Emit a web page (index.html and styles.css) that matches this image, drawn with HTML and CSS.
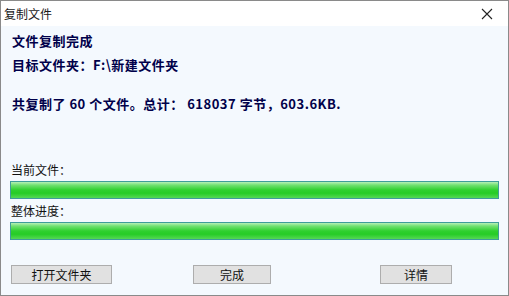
FILE: index.html
```html
<!DOCTYPE html>
<html lang="zh-CN">
<head>
    <meta charset="UTF-8">
    <title>复制文件</title>
    <link rel="stylesheet" href="styles.css">
</head>
<body>
    <div class="window">
        <div class="titlebar">
            <span class="title">复制文件</span>
            <svg class="close" width="12" height="12" viewBox="0 0 12 12">
                <path d="M1 1 L11 11 M11 1 L1 11" stroke="#222" stroke-width="1.1" fill="none"/>
            </svg>
        </div>
        <div class="content">
            <div class="info first">文件复制完成</div>
            <div class="info">目标文件夹：F:\新建文件夹</div>
            <div class="info summary">共复制了 60 个文件。总计： 618037 字节，603.6KB.</div>

            <div class="label first-label">当前文件：</div>
            <div class="bar"><div class="fill"></div></div>
            <div class="label">整体进度：</div>
            <div class="bar"><div class="fill"></div></div>

            <div class="buttons">
                <button class="btn btn-open">打开文件夹</button>
                <button class="btn btn-done">完成</button>
                <button class="btn btn-detail">详情</button>
            </div>
        </div>
    </div>
</body>
</html>
```

FILE: styles.css
```css
body {
    margin: 0;
    padding: 0;
    font-family: "Noto Sans CJK SC", "Liberation Sans", sans-serif;
}

.window {
    box-sizing: border-box;
    width: 509px;
    height: 296px;
    border: 1px solid #8a8a8a;
    background-color: #f4f9fe;
}

.titlebar {
    height: 25px;
    background-color: #ffffff;
    display: flex;
    align-items: center;
    justify-content: space-between;
    padding: 0 15px 0 3px;
}

.title {
    font-size: 12px;
    color: #1a1a1a;
}

.close {
    display: block;
}

.content {
    padding: 3px 9px 0 9px;
}

.info {
    font-size: 13px;
    font-weight: bold;
    color: #00004a;
    line-height: 24px;
    padding-left: 2px;
    letter-spacing: 0.5px;
    white-space: nowrap;
}

.summary {
    margin-top: 15px;
}

.label {
    font-size: 12px;
    color: #111;
    line-height: 16px;
    margin-top: 4px;
    padding-left: 1px;
}

.first-label {
    margin-top: 46px;
}

.bar {
    margin-top: 3px;
    height: 18px;
    box-sizing: border-box;
    border: 1px solid #3f9c9a;
    background-color: #e6e6e6;
}

.fill {
    width: 100%;
    height: 100%;
    background: linear-gradient(to bottom, #b6f0b6 0%, #6fe06f 20%, #2fd02f 50%, #26cc26 70%, #55d855 100%);
}

.buttons {
    display: flex;
    margin-top: 25px;
    padding-left: 1px;
}

.btn {
    height: 19px;
    padding: 0;
    border: 1px solid #adadad;
    background-color: #e1e1e1;
    font-family: "Noto Sans CJK SC", "Liberation Sans", sans-serif;
    font-size: 12px;
    color: #111;
    line-height: 16px;
}

.btn-open {
    width: 101px;
}

.btn-done {
    width: 78px;
    margin-left: 81px;
}

.btn-detail {
    width: 72px;
    margin-left: 109px;
}
```
